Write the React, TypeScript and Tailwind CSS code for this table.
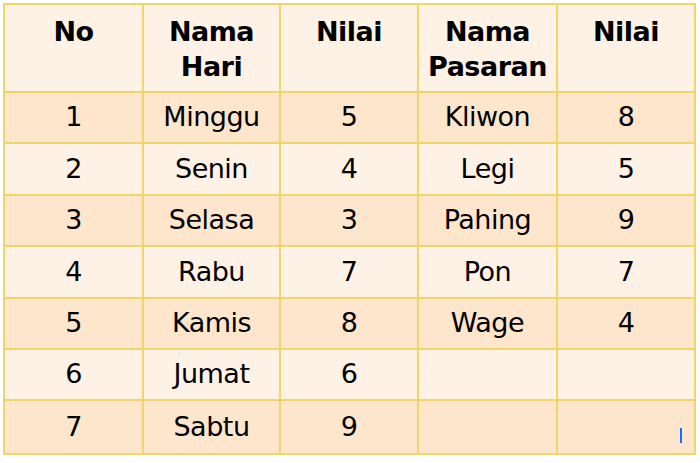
const hari = [
  ['1', 'Minggu', '5', 'Kliwon', '8'],
  ['2', 'Senin', '4', 'Legi', '5'],
  ['3', 'Selasa', '3', 'Pahing', '9'],
  ['4', 'Rabu', '7', 'Pon', '7'],
  ['5', 'Kamis', '8', 'Wage', '4'],
  ['6', 'Jumat', '6', '', ''],
  ['7', 'Sabtu', '9', '', ''],
]

const headers = [['No'], ['Nama', 'Hari'], ['Nilai'], ['Nama', 'Pasaran'], ['Nilai']]

export default function App() {
  return (
    <div
      className="relative w-[700px] h-[463px] bg-white pl-[3px] pt-[3px]"
      style={{ fontFamily: '"Comic Sans MS", "DejaVu Sans", sans-serif' }}
    >
      <div className="w-[693px] border-2 border-[#f2d469] grid grid-cols-[139px_137px_138px_139px_1fr] text-black">
        {headers.map((h, i) => (
          <div
            key={i}
            className={`h-[88px] bg-[#fdf2e5] border-b-2 border-[#f2d469] pt-[9px] text-center font-bold text-[27px] leading-[35px] tracking-[-0.5px] ${i < 4 ? 'border-r-2' : ''}`}
          >
            {h.map((line) => (
              <div key={line}>{line}</div>
            ))}
          </div>
        ))}
        {hari.map((row, r) =>
          row.map((cell, c) => (
            <div
              key={`${r}-${c}`}
              className={`h-[51.4px] flex items-center justify-center text-[27px] tracking-[-0.5px] border-[#f2d469] ${
                r % 2 === 0 ? 'bg-[#fde6cc]' : 'bg-[#fef2e6]'
              } ${c < 4 ? 'border-r-2' : ''} ${r < 6 ? 'border-b-2' : ''}`}
            >
              {cell}
            </div>
          ))
        )}
      </div>
      <div className="absolute left-[680px] top-[428px] w-[2px] h-[15px] bg-[#1a6dff]" />
    </div>
  )
}
